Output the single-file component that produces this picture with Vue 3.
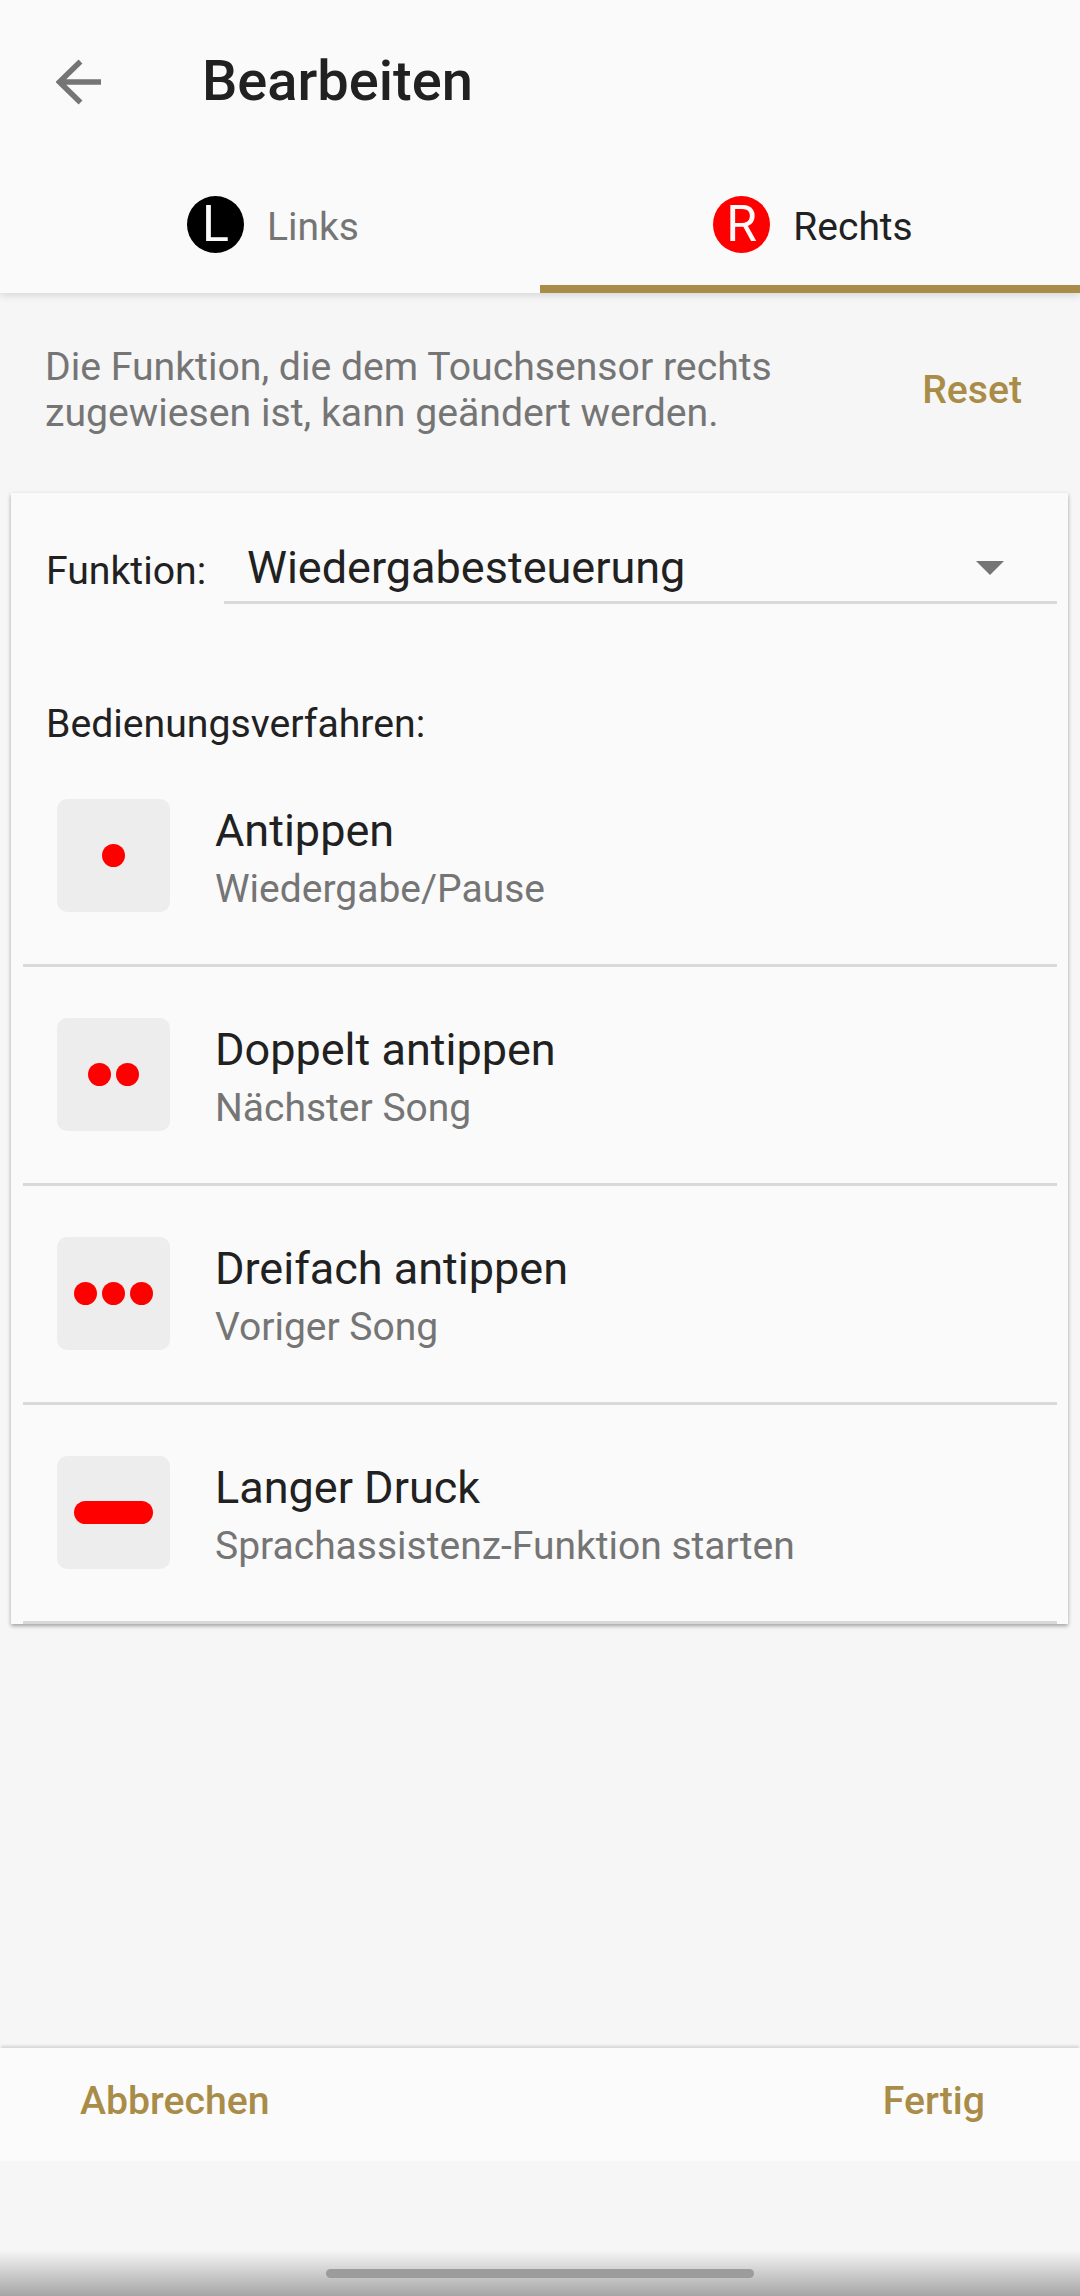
<script setup>
const rows = [
  { title: 'Antippen', sub: 'Wiedergabe/Pause', dots: 1 },
  { title: 'Doppelt antippen', sub: 'Nächster Song', dots: 2 },
  { title: 'Dreifach antippen', sub: 'Voriger Song', dots: 3 },
  { title: 'Langer Druck', sub: 'Sprachassistenz-Funktion starten', dots: 0 },
]
</script>

<template>
  <div class="page">
    <header class="head">
      <div class="bar">
        <svg class="back" width="46" height="46" viewBox="0 0 46 46">
          <path d="M45 23H4M24.500 2.500 3.500 23l21 20.500" fill="none" stroke="#757575" stroke-width="5.500" />
        </svg>
        <h1 class="title">Bearbeiten</h1>
      </div>
      <div class="tabs">
        <div class="tab">
          <span class="badge black">L</span>
          <span class="tab-text muted">Links</span>
        </div>
        <div class="tab active">
          <span class="badge red">R</span>
          <span class="tab-text">Rechts</span>
        </div>
      </div>
    </header>

    <section class="intro">
      <p class="desc">Die Funktion, die dem Touchsensor rechts<br />zugewiesen ist, kann geändert werden.</p>
      <span class="reset">Reset</span>
    </section>

    <section class="card">
      <div class="func">
        <span class="label">Funktion:</span>
        <div class="select">
          <span class="select-text">Wiedergabesteuerung</span>
          <span class="caret"></span>
        </div>
      </div>
      <div class="label method">Bedienungsverfahren:</div>
      <div v-for="r in rows" :key="r.title" class="row">
        <div class="icon">
          <template v-if="r.dots">
            <span v-for="n in r.dots" :key="n" class="dot"></span>
          </template>
          <span v-else class="pill"></span>
        </div>
        <div class="texts">
          <div class="row-title">{{ r.title }}</div>
          <div class="row-sub">{{ r.sub }}</div>
        </div>
      </div>
    </section>

    <footer class="foot">
      <span>Abbrechen</span>
      <span>Fertig</span>
    </footer>

    <div class="gesture"><span class="handle"></span></div>
  </div>
</template>

<style>
html, body { margin: 0; padding: 0; background: #f6f6f6; }
</style>

<style scoped>
.page {
  position: relative;
  width: 1080px;
  height: 2296px;
  overflow: hidden;
  display: flex;
  flex-direction: column;
  background: #f6f6f6;
  font-family: Roboto, "Liberation Sans", sans-serif;
  color: #212121;
}
.head {
  background: #fafafa;
  height: 293px;
  box-shadow: 0 2px 8px rgba(0, 0, 0, 0.14);
  display: flex;
  flex-direction: column;
}
.bar {
  height: 163px;
  display: flex;
  align-items: center;
  padding-left: 56px;
}
.back { flex: none; }
.title {
  margin: 0 0 0 100px;
  font-size: 56px;
  font-weight: 500;
  color: #212121;
  position: relative;
  top: -1px;
}
.tabs { flex: 1; display: flex; }
.tab {
  flex: 1;
  display: flex;
  align-items: center;
  justify-content: center;
  gap: 23px;
  padding: 0 0 8px 6px;
}
.tab.active { border-bottom: 8px solid #a98c47; padding-bottom: 0; }
.badge {
  width: 57px;
  height: 57px;
  border-radius: 50%;
  display: flex;
  align-items: center;
  justify-content: center;
  color: #fafafa;
  font-size: 50px;
  font-weight: 400;
}
.black { background: #000; }
.red { background: #f00; }
.tab-text { font-size: 39px; color: #212121; padding-top: 6px; }
.muted { color: #757575; }
.intro {
  display: flex;
  align-items: center;
  justify-content: space-between;
  padding: 46px 58px 0 45px;
  height: 148px;
  box-sizing: border-box;
}
.desc {
  margin: 0;
  font-size: 39.2px;
  line-height: 46px;
  color: #757575;
}
.reset { font-size: 39.2px; font-weight: 500; color: #a98c47; }
.card {
  margin: 52px 12px 0 11px;
  background: #fafafa;
  height: 1131px;
  box-shadow: 0 2px 4px rgba(0, 0, 0, 0.35);
  box-sizing: border-box;
  padding: 0 11px 0 12px;
}
.func {
  display: flex;
  align-items: flex-end;
  height: 111px;
  padding-left: 23px;
}
.label { font-size: 39.2px; color: #212121; }
.func .label { width: 178px; flex: none; padding-bottom: 12px; line-height: 42px; }
.select {
  flex: 1;
  height: 70px;
  border-bottom: 3px solid #d9d9d9;
  display: flex;
  align-items: center;
  justify-content: space-between;
  padding: 0 53px 0 23px;
}
.select-text { font-size: 45px; color: #212121; padding-top: 2px; }
.caret {
  width: 0;
  height: 0;
  margin-top: 3px;
  border-left: 14px solid transparent;
  border-right: 14px solid transparent;
  border-top: 14px solid #757575;
}
.method { padding: 99px 0 0 23px; line-height: 42px; height: 45px; }
.row {
  height: 219px;
  box-sizing: border-box;
  border-bottom: 3px solid #d9d9d9;
  display: flex;
  align-items: center;
  padding: 0 0 0 34px;
}
.icon {
  width: 113px;
  height: 113px;
  flex: none;
  margin-bottom: 2px;
  background: #ededed;
  border-radius: 10px;
  display: flex;
  align-items: center;
  justify-content: center;
  gap: 5px;
}
.dot { width: 23px; height: 23px; border-radius: 50%; background: #f00; }
.pill { width: 79px; height: 23px; border-radius: 12px; background: #f00; }
.texts { margin-left: 45px; padding-top: 8px; }
.row-title { font-size: 45px; line-height: 58px; color: #212121; }
.row-sub { font-size: 39px; line-height: 58px; color: #757575; }
.foot {
  margin-top: auto;
  margin-bottom: 135px;
  height: 113px;
  box-sizing: border-box;
  padding: 0 95px 7px 80px;
  background: #fbfbfb;
  box-shadow: 0 -3px 3px -1px rgba(0, 0, 0, 0.14);
  display: flex;
  align-items: center;
  justify-content: space-between;
  font-size: 39.2px;
  font-weight: 500;
  color: #a98c47;
}
.gesture {
  position: absolute;
  left: 0;
  right: 0;
  bottom: 0;
  height: 46px;
  background: linear-gradient(to bottom, rgba(165, 165, 165, 0), rgba(165, 165, 165, 1));
}
.handle {
  position: absolute;
  left: 326px;
  top: 19px;
  width: 428px;
  height: 9px;
  border-radius: 5px;
  background: #9c9c9c;
}
</style>
